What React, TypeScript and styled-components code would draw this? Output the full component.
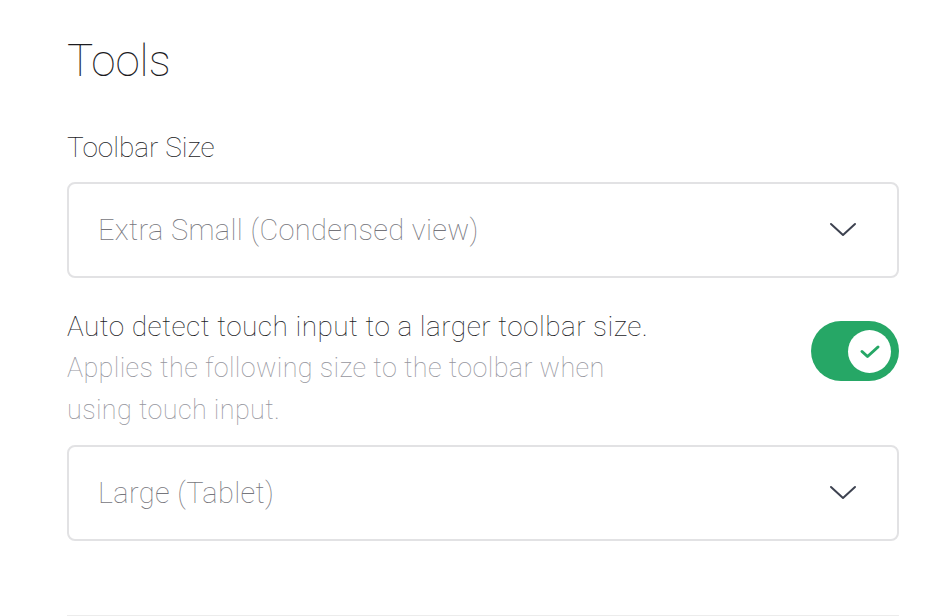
import React, { useState } from 'react'
import styled, { createGlobalStyle } from 'styled-components'

const GlobalStyle = createGlobalStyle`
  html, body {
    margin: 0;
    padding: 0;
    background: #ffffff;
  }
  body {
    font-family: Roboto, 'Liberation Sans', sans-serif;
    font-weight: 100;
    -webkit-font-smoothing: antialiased;
  }
`

const Page = styled.div`
  width: 832px;
  padding: 35px 0 0 67px;
`

const Heading = styled.h1`
  margin: 0;
  font-size: 44px;
  line-height: 52px;
  font-weight: 100;
  color: #1c1c1f;
`

const FieldLabel = styled.div`
  margin-top: 45px;
  font-size: 28px;
  line-height: 32px;
  color: #1c1c1f;
`

const SelectBox = styled.div<{ $top: number }>`
  margin-top: ${p => p.$top}px;
  height: 96px;
  box-sizing: border-box;
  border: 2px solid #e2e2e4;
  border-radius: 8px;
  display: flex;
  align-items: center;
  justify-content: space-between;
  padding: 0 40px 0 29px;
  cursor: pointer;
`

const SelectValue = styled.span`
  font-size: 29px;
  letter-spacing: 0.35px;
  color: #76767c;
`

const Chevron = () => (
  <svg width="28" height="16" viewBox="0 0 28 16" fill="none">
    <path d="M2 2 L14 13 L26 2" stroke="#3d4250" strokeWidth="2" strokeLinecap="round" strokeLinejoin="round" />
  </svg>
)

const ToggleRow = styled.div`
  margin-top: 31px;
  display: flex;
  justify-content: space-between;
  align-items: flex-start;
`

const ToggleText = styled.div`
  display: flex;
  flex-direction: column;
`

const ToggleTitle = styled.div`
  font-size: 28px;
  line-height: 36px;
  letter-spacing: 0.45px;
  color: #1c1c1f;
`

const ToggleHint = styled.div`
  width: 580px;
  margin-top: 2px;
  font-size: 27px;
  line-height: 42px;
  letter-spacing: 0.35px;
  color: #96969e;
`

const Switch = styled.button<{ $on: boolean }>`
  flex: none;
  width: 88px;
  height: 60px;
  margin-top: 12px;
  border: none;
  border-radius: 30px;
  padding: 0 8px;
  background: ${p => (p.$on ? '#26a766' : '#c8c8cc')};
  display: flex;
  align-items: center;
  justify-content: ${p => (p.$on ? 'flex-end' : 'flex-start')};
  cursor: pointer;
`

const Knob = styled.span`
  width: 43px;
  height: 43px;
  border-radius: 50%;
  background: #ffffff;
  display: flex;
  align-items: center;
  justify-content: center;
`

const Divider = styled.hr`
  margin: 74px 0 0;
  border: none;
  border-top: 1px solid #ececec;
`

export default function App() {
  const [auto, setAuto] = useState(true)

  return (
    <>
      <GlobalStyle />
      <Page>
        <Heading>Tools</Heading>
        <FieldLabel>Toolbar Size</FieldLabel>
        <SelectBox $top={18}>
          <SelectValue>Extra Small (Condensed view)</SelectValue>
          <Chevron />
        </SelectBox>
        <ToggleRow>
          <ToggleText>
            <ToggleTitle>Auto detect touch input to a larger toolbar size.</ToggleTitle>
            <ToggleHint>Applies the following size to the toolbar when using touch input.</ToggleHint>
          </ToggleText>
          <Switch $on={auto} onClick={() => setAuto(!auto)} aria-pressed={auto}>
            <Knob>
              {auto && (
                <svg width="22" height="15" viewBox="0 0 22 15" fill="none">
                  <path d="M3 7.5 L8.5 12.5 L19 3" stroke="#26a766" strokeWidth="3" strokeLinecap="round" strokeLinejoin="round" />
                </svg>
              )}
            </Knob>
          </Switch>
        </ToggleRow>
        <SelectBox $top={14}>
          <SelectValue>Large (Tablet)</SelectValue>
          <Chevron />
        </SelectBox>
        <Divider />
      </Page>
    </>
  )
}
